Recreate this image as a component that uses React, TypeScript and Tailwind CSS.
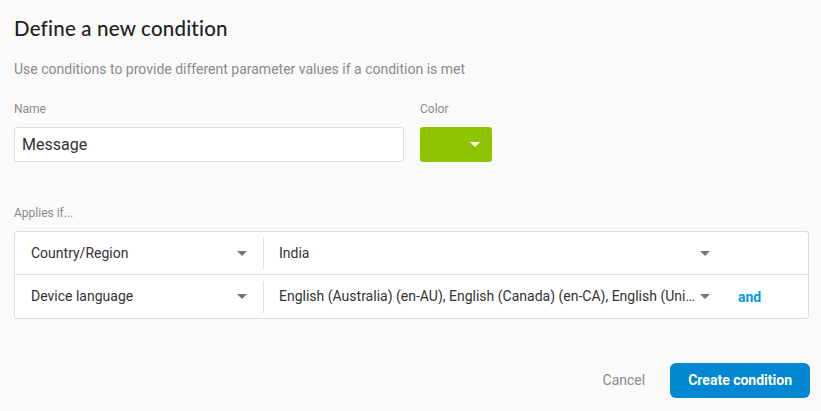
import type { ReactNode } from "react"

// small material-style caret used by every select
function Caret({ className = "" }: { className?: string }) {
  return (
    <svg width="10" height="5" viewBox="0 0 10 5" className={className}>
      <path d="M0 0h10L5 5z" fill="currentColor" />
    </svg>
  )
}

function Row({ field, value, last, extra }: { field: string; value: string; last?: boolean; extra?: ReactNode }) {
  return (
    <div className={`flex items-center h-[43px] ${last ? "" : "border-b border-[#e0e0e0]"}`}>
      <div className="flex items-center w-[248px] pl-[16px] pr-[16px] shrink-0">
        <span className="flex-1 text-[14px] text-[#333]">{field}</span>
        <Caret className="text-[#757575]" />
      </div>
      <div className="w-px h-[32px] bg-[#e0e0e0] shrink-0" />
      <div className="flex items-center w-[446px] pl-[15px] shrink-0">
        <span className="flex-1 min-w-0 whitespace-nowrap overflow-hidden text-[14px] text-[#333]">{value}</span>
        <Caret className="text-[#757575] ml-[3px] shrink-0" />
      </div>
      <div className="pl-[28px]">{extra}</div>
    </div>
  )
}

export default function App() {
  return (
    <div className="w-[821px] h-[411px] bg-[#fafafa] px-[14px] pt-[16px] font-['Roboto','Liberation_Sans',sans-serif] overflow-hidden">
      <h1 className="text-[20.5px] leading-[24px] text-[#212121] font-['Lato','Roboto',sans-serif] font-medium tracking-[0.2px]">
        Define a new condition
      </h1>
      <p className="mt-[20px] text-[14px] leading-[18px] text-[#8a8a8a]">
        Use conditions to provide different parameter values if a condition is met
      </p>

      {/* ── Name + color ─────────────────────────────────────────── */}
      <div className="flex gap-[16px] mt-[23px]">
        <div className="w-[390px]">
          <div className="text-[12px] leading-[16px] text-[#8a8a8a]">Name</div>
          <div className="mt-[10px] h-[35px] bg-white border border-[#dcdcdc] rounded-[3px] flex items-center px-[7px] text-[16px] text-[#333]">
            Message
          </div>
        </div>
        <div>
          <div className="text-[12px] leading-[16px] text-[#8a8a8a]">Color</div>
          <div className="mt-[10px] w-[72px] h-[35px] bg-[#8fc400] rounded-[3px] flex items-center justify-end pr-[12px]">
            <Caret className="text-white" />
          </div>
        </div>
      </div>

      {/* ── Conditions table ─────────────────────────────────────── */}
      <div className="mt-[43px] text-[12px] leading-[16px] text-[#8a8a8a]">Applies if...</div>
      <div className="mt-[10px] w-[795px] bg-white border border-[#dcdcdc] rounded-[3px]">
        <Row field="Country/Region" value="India" />
        <Row
          field="Device language"
          value="English (Australia) (en-AU), English (Canada) (en-CA), English (Uni…"
          last
          extra={<span className="text-[14px] font-bold text-[#039be5]">and</span>}
        />
      </div>

      {/* ── Actions ──────────────────────────────────────────────── */}
      <div className="flex justify-end items-center mt-[44px] w-[796px]">
        <button className="text-[14px] text-[#8a8a8a] px-[8px] mr-[17px]">Cancel</button>
        <button className="h-[35px] px-[18px] rounded-[6px] bg-[#0288d1] text-white text-[14px] font-bold">
          Create condition
        </button>
      </div>
    </div>
  )
}
